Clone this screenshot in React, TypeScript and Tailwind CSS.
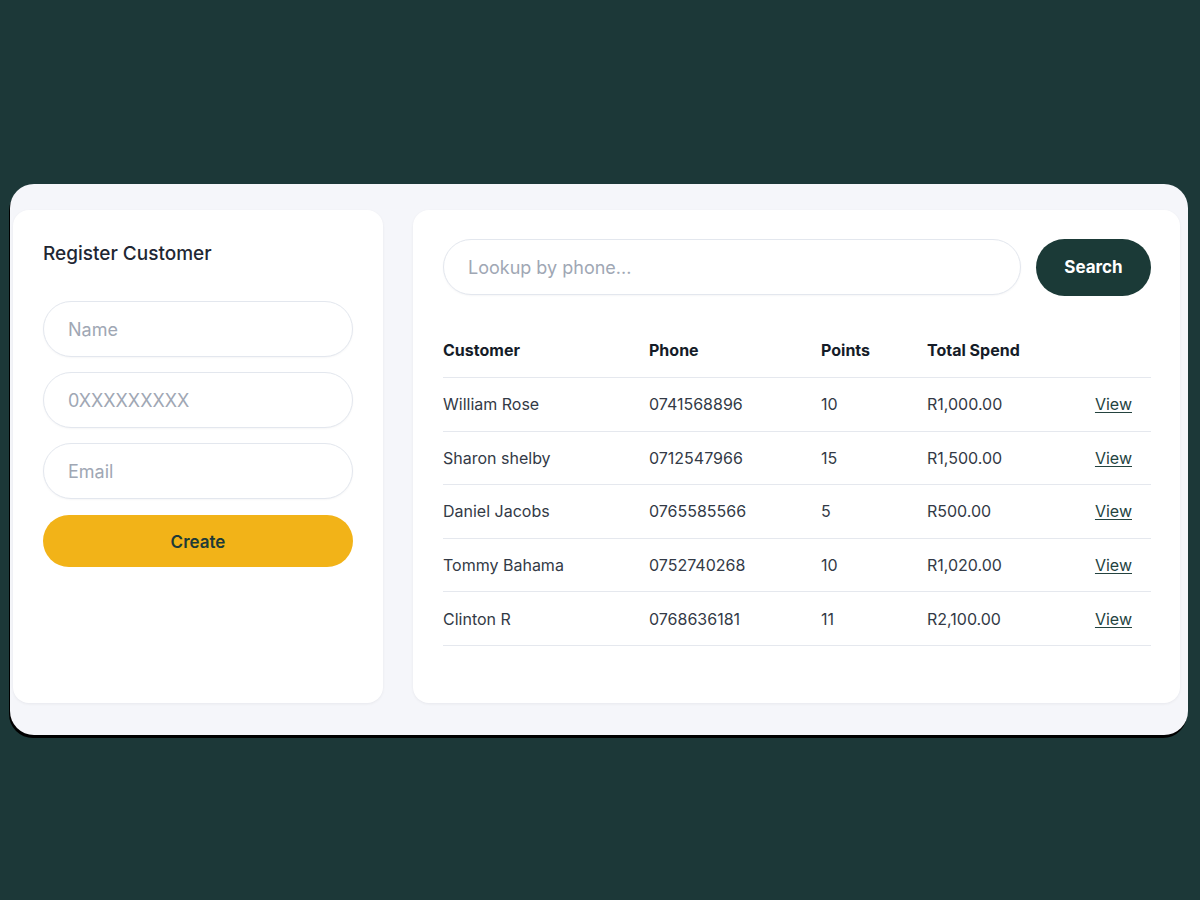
const customers = [
  { name: "William Rose", phone: "0741568896", points: 10, spend: "R1,000.00" },
  { name: "Sharon shelby", phone: "0712547966", points: 15, spend: "R1,500.00" },
  { name: "Daniel Jacobs", phone: "0765585566", points: 5, spend: "R500.00" },
  { name: "Tommy Bahama", phone: "0752740268", points: 10, spend: "R1,020.00" },
  { name: "Clinton R", phone: "0768636181", points: 11, spend: "R2,100.00" },
];

const font = { fontFamily: "Inter, 'Noto Sans', sans-serif" };

function Field({ placeholder }: { placeholder: string }) {
  return (
    <input
      placeholder={placeholder}
      className="h-[56px] w-full rounded-full border border-[#e3e7ee] bg-white px-6 text-[18px] text-[#1f2937] placeholder:text-[#a0a7b4] shadow-[0_1px_2px_rgba(15,23,42,0.04)] focus:outline-none"
    />
  );
}

export default function App() {
  return (
    <div className="min-h-screen bg-[#1c3838] pt-[184px] pl-[10px] pr-[12px]" style={font}>
      <div className="flex h-[551px] gap-[30px] rounded-[24px] bg-[#f5f6fa] pt-[26px] pb-[32px] pl-[3px] pr-[8px] shadow-[-1px_3px_0_#000]">
        {/* Register form */}
        <section className="flex w-[370px] shrink-0 flex-col rounded-2xl bg-white px-[30px] pt-[32px] shadow-[0_1px_3px_rgba(15,23,42,0.06)]">
          <h2 className="text-[19px] font-medium leading-6 text-[#1f2733]">Register Customer</h2>
          <div className="mt-[35px] flex flex-col gap-[15px]">
            <Field placeholder="Name" />
            <Field placeholder="0XXXXXXXXX" />
            <Field placeholder="Email" />
          </div>
          <button className="mt-[16px] h-[52px] w-full rounded-full bg-[#f2b318] pt-[3px] text-[17px] font-semibold text-[#1e3a37]">
            Create
          </button>
        </section>

        {/* Lookup + table */}
        <section className="flex flex-1 flex-col rounded-2xl bg-white pl-[30px] pr-[29px] pt-[29px] shadow-[0_1px_3px_rgba(15,23,42,0.06)]">
          <div className="flex gap-[15px]">
            <input
              placeholder="Lookup by phone..."
              className="h-[56px] flex-1 rounded-full border border-[#e3e7ee] bg-white px-6 text-[18px] text-[#1f2937] placeholder:text-[#a0a7b4] shadow-[0_1px_2px_rgba(15,23,42,0.04)] focus:outline-none"
            />
            <button className="h-[57px] w-[115px] rounded-full bg-[#1b3a37] text-[17px] font-bold text-white">
              Search
            </button>
          </div>

          <div className="mt-[27px]">
            <div className="grid h-[55px] grid-cols-[206px_172px_106px_1fr_auto] items-center border-b border-[#e5e8ee] text-[16px] font-bold text-[#151c28]">
              <span>Customer</span>
              <span>Phone</span>
              <span>Points</span>
              <span>Total Spend</span>
              <span />
            </div>
            {customers.map((c) => (
              <div
                key={c.phone}
                className="grid h-[53.6px] grid-cols-[206px_172px_106px_1fr_auto] items-center border-b border-[#e5e8ee] text-[16px] text-[#333a46]"
              >
                <span>{c.name}</span>
                <span>{c.phone}</span>
                <span>{c.points}</span>
                <span>{c.spend}</span>
                <a href="#" className="pr-[19px] text-[#24433f] underline underline-offset-2">
                  View
                </a>
              </div>
            ))}
          </div>
        </section>
      </div>
    </div>
  );
}
